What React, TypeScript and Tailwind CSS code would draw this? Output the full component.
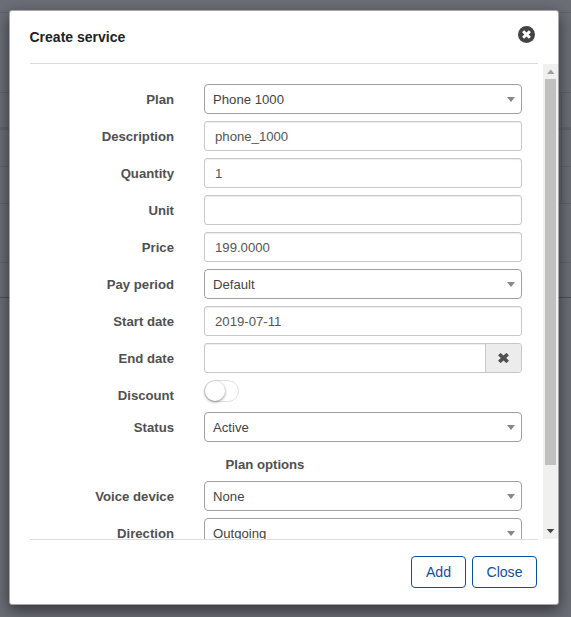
import type { ReactNode } from 'react';

type RowProps = { label: string; children: ReactNode };

function Row({ label, children }: RowProps) {
  return (
    <div className="flex h-[30px] shrink-0 items-center gap-[30px]">
      <label className="w-36 pt-[2px] text-right font-bold leading-5 text-[#505050]">{label}</label>
      {children}
    </div>
  );
}

function Caret() {
  return (
    <svg viewBox="0 0 8 5" className="h-[5px] w-2" fill="#888">
      <path d="M0 0h8L4 5Z" />
    </svg>
  );
}

function Select({ value }: { value: string }) {
  return (
    <div className="flex h-[30px] w-[318px] items-center justify-between rounded border border-[#a0a0a0] bg-white pl-2 pr-[6px] text-[#444]">
      <span className="pt-[2px] leading-5">{value}</span>
      <Caret />
    </div>
  );
}

function Input({ value = '' }: { value?: string }) {
  return (
    <div className="flex h-[30px] w-[318px] items-center rounded-[3px] border border-[#c8c8c8] bg-white pl-[10px] text-[#555] shadow-[inset_0_1px_1px_rgba(0,0,0,0.075)]">
      <span className="pt-[2px] leading-5">{value}</span>
    </div>
  );
}

function Cross({ className }: { className: string }) {
  return (
    <svg viewBox="0 0 11 10" className={className} fill="currentColor">
      <path d="M3 .2 5.5 2.6 8 .2q.4-.4.8 0l1.8 1.7q.4.4 0 .8L8.2 5l2.4 2.3q.4.4 0 .8L8.8 9.8q-.4.4-.8 0L5.5 7.4 3 9.8q-.4.4-.8 0L.4 8.1q-.4-.4 0-.8L2.8 5 .4 2.7q-.4-.4 0-.8L2.2.2q.4-.4.8 0Z" />
    </svg>
  );
}

function Backdrop() {
  return (
    <div className="absolute inset-0 flex flex-col bg-[#6b6e76]">
      <div className="h-[13px] border-b border-[#5f6269]" />
      <div className="h-20 border-b border-[#5f6269]" />
      <div className="h-[34px] pl-[561px]">
        <div className="h-full border-l border-[#5f6269]" />
      </div>
      <div className="h-[3px] bg-[#61646b]" />
      <div className="h-[37px] border-b border-[#5f6269] pl-[561px]">
        <div className="h-full border-l border-[#5f6269]" />
      </div>
      <div className="h-[37px] border-b border-[#5f6269] pl-[561px]">
        <div className="h-full border-l border-[#5f6269]" />
      </div>
      <div className="h-[59px] border-b border-[#5f6269]" />
      <div className="h-[35px] border-b border-[#4d4f55]" />
    </div>
  );
}

export default function App() {
  return (
    <div className="relative h-[617px] w-[571px] overflow-hidden pl-[9px] pt-[10px] font-['Liberation_Sans',Arial,sans-serif] text-[13.16px]">
      <Backdrop />
      <div className="relative flex h-[595px] w-[550px] flex-col rounded-[3px] border border-[#a5a6aa] bg-white shadow-[0_5px_15px_rgba(0,0,0,0.55)]">
        <header className="ml-5 mr-5 flex h-[53px] shrink-0 items-center justify-between border-b border-[#ddd]">
          <h1 className="-ml-[0.5px] text-sm font-bold leading-5 text-[#222]">Create service</h1>
          <button className="mb-[6px] mr-[3px] flex h-[17px] w-[17px] items-center justify-center rounded-full bg-[#444] text-white">
            <Cross className="h-[9px] w-[9px]" />
          </button>
        </header>

        <div className="flex h-[475px] shrink-0 justify-between">
          <main className="flex h-full w-[528px] flex-col gap-[7px] overflow-hidden pl-5 pt-5">
            <Row label="Plan"><Select value="Phone 1000" /></Row>
            <Row label="Description"><Input value="phone_1000" /></Row>
            <Row label="Quantity"><Input value="1" /></Row>
            <Row label="Unit"><Input /></Row>
            <Row label="Price"><Input value="199.0000" /></Row>
            <Row label="Pay period"><Select value="Default" /></Row>
            <Row label="Start date"><Input value="2019-07-11" /></Row>
            <Row label="End date">
              <div className="flex h-[30px] w-[318px] overflow-hidden rounded-[3px] border border-[#c8c8c8] shadow-[inset_0_1px_1px_rgba(0,0,0,0.075)]">
                <div className="flex-1" />
                <button className="flex w-9 items-center justify-center border-l border-[#c8c8c8] bg-[#ececec] text-[#505050]">
                  <Cross className="h-[10px] w-[11px]" />
                </button>
              </div>
            </Row>
            <div className="-mb-[5px]">
              <Row label="Discount">
                <div className="mb-2 flex h-[22px] w-[35px] rounded-full border border-[#dfdfdf] bg-white">
                  <span className="h-5 w-5 rounded-full bg-white shadow-[0_1px_3px_rgba(0,0,0,0.45)]" />
                </div>
              </Row>
            </div>
            <Row label="Status"><Select value="Active" /></Row>
            <div className="flex h-[25px] w-[492px] shrink-0 items-center pl-[195.5px] pt-[7px] font-bold leading-5 text-[#505050]">Plan options</div>
            <Row label="Voice device"><Select value="None" /></Row>
            <Row label="Direction"><Select value="Outgoing" /></Row>
          </main>
          <div className="flex w-[15px] flex-col items-center bg-[#f0f0f0]">
            <svg viewBox="0 0 15 15" className="h-[15px] w-[15px] shrink-0"><path d="M4 10h7.5L7.75 5.5Z" fill="#a0a0a0" /></svg>
            <div className="h-[386px] w-[11px] bg-[#c0c0c0]" />
            <svg viewBox="0 0 15 15" className="mt-auto h-[15px] w-[15px] shrink-0"><path d="M3.7 5h7.6L7.5 9.2Z" fill="#444" /></svg>
          </div>
        </div>

        <footer className="mx-5 flex h-[65px] items-start justify-end gap-[6px] border-t border-[#ddd] pr-px pt-4 text-[14.1px] text-[#0b51a1]">
          <button className="h-8 w-[55px] rounded border border-[#0b51a1] leading-5">Add</button>
          <button className="h-8 w-[65px] rounded border border-[#0b51a1] leading-5">Close</button>
        </footer>
      </div>
    </div>
  );
}
